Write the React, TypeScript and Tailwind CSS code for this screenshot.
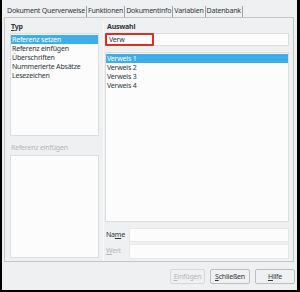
import React from "react"

const font = { fontFamily: '"Noto Sans", "DejaVu Sans", sans-serif' }

const tabs = ["Dokument Querverweise", "Funktionen", "Dokumentinfo", "Variablen", "Datenbank"]
const types = ["Referenz setzen", "Referenz einfügen", "Überschriften", "Nummerierte Absätze", "Lesezeichen"]
const refs = ["Verweis 1", "Verweis 2", "Verweis 3", "Verweis 4"]

const ListItem = ({ label, selected }: { label: string; selected?: boolean }) => (
    <div
        className={`h-[9px] leading-[9px] px-[1px] whitespace-nowrap ${selected ? "bg-[#3daee9] text-white" : "text-[#31363b]"}`}
    >
        {label}
    </div>
)

export default function App() {
    return (
        <div
            style={font}
            className="w-[300px] h-[292px] bg-[#eff0f1] border-l-2 border-r-[3px] border-b-2 border-black flex flex-col text-[7px] tracking-[-0.2px] text-[#31363b]"
        >
            {/* tab bar */}
            <div className="flex items-end h-[17px] pl-[4px] pt-[6px]">
                {tabs.map((t, i) => (
                    <div
                        key={t}
                        className={`h-[11px] leading-[10px] px-[1px] border-r border-[#9fa1a3] ${i === 0 ? "bg-[#eff0f1]" : ""}`}
                    >
                        {t}
                    </div>
                ))}
            </div>

            {/* panel */}
            <div className="ml-[2px] mr-[3px] h-[245px] border border-[#c3c5c6] bg-[#eff0f1] flex pl-[5px] pr-[4px] pt-[4px]">
                <div className="w-[89px] flex flex-col">
                    <div className="h-[11px] leading-[9px] font-bold pl-[1px]">
                        <span className="underline">T</span>yp
                    </div>
                    <div className="h-[103px] bg-[#fcfcfc] border border-[#dcdddd] pt-[1px]">
                        {types.map((t, i) => (
                            <ListItem key={t} label={t} selected={i === 0} />
                        ))}
                    </div>
                    <div className="h-[19px] leading-[23px] text-[#b4b6b7] pl-[1px]">Referenz einfügen</div>
                    <div className="h-[103px] bg-[#fcfcfc] border border-[#dcdddd]"></div>
                </div>

                <div className="ml-[4px] mr-[1px] w-px bg-[#f8f9f9]"></div>

                <div className="flex-1 flex flex-col">
                    <div className="h-[11px] leading-[9px] font-bold pl-[2px]">Auswahl</div>
                    <div className="relative h-[13px] bg-[#fcfcfc] border border-[#dcdddd]">
                        <div className="pl-[3px] leading-[11px]">Verw</div>
                        <div className="absolute left-[-1px] top-[-1px] w-[49px] h-[13px] border-2 border-[#d9302c] rounded-[1px]"></div>
                    </div>
                    <div className="h-[6px]"></div>
                    <div className="h-[170px] bg-[#fcfcfc] border border-[#dcdddd] pt-[1px]">
                        {refs.map((r, i) => (
                            <ListItem key={r} label={r} selected={i === 0} />
                        ))}
                    </div>
                    <div className="h-[6px]"></div>
                    <div className="flex items-center h-[14px]">
                        <div className="w-[24px] pl-[1px]">
                            Na<span className="underline">m</span>e
                        </div>
                        <div className="flex-1 h-[14px] bg-[#fcfcfc] border border-[#e6e7e7]"></div>
                    </div>
                    <div className="h-[2px]"></div>
                    <div className="flex items-center h-[15px]">
                        <div className="w-[24px] pl-[1px] text-[#b4b6b7]">
                            <span className="underline">W</span>ert
                        </div>
                        <div className="flex-1 h-[15px] bg-[#fcfcfc] border border-[#e6e7e7]"></div>
                    </div>
                </div>
            </div>

            {/* footer buttons */}
            <div className="flex justify-end items-start gap-[5px] pr-[2px] pt-[7px] flex-1">
                <button className="w-[35px] h-[15px] border border-[#d5d7d8] bg-[#eff0f1] text-[#b4b6b7] rounded-[2px] text-[7px] leading-[13px]">
                    <span className="underline">E</span>infügen
                </button>
                <button className="w-[40px] h-[15px] border border-[#bcbebf] bg-[#eff0f1] text-[#31363b] rounded-[2px] text-[7px] leading-[13px]">
                    <span className="underline">S</span>chließen
                </button>
                <button className="w-[40px] h-[15px] border border-[#bcbebf] bg-[#eff0f1] text-[#31363b] rounded-[2px] text-[7px] leading-[13px]">
                    <span className="underline">H</span>ilfe
                </button>
            </div>
        </div>
    )
}
